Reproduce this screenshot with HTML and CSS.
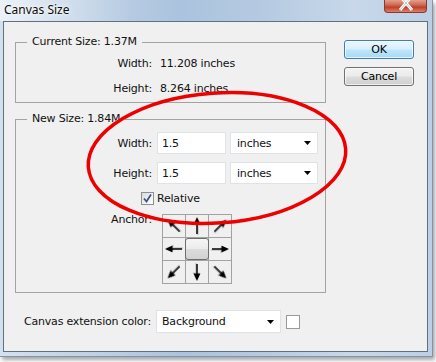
FILE: index.html
```html
<!DOCTYPE html>
<html>
<head>
<meta charset="utf-8">
<title>Canvas Size</title>
<link rel="stylesheet" href="styles.css">
</head>
<body>
<div class="window">
  <div class="titlebar">
    <span class="title">Canvas Size</span>
    <span class="close"><svg class="close-x" width="16" height="14" viewBox="0 0 16 14"><path d="M2 -4 L14 10 M14 -4 L2 10" stroke="#ffffff" stroke-width="3" fill="none"/><path d="M2 -4 L14 10 M14 -4 L2 10" stroke="#c9c9c9" stroke-width="1" fill="none"/></svg></span>
  </div>
  <div class="client">
    <div class="main">
      <fieldset class="group current">
        <legend>Current Size: 1.37M</legend>
        <div class="info-row"><span class="lbl">Width:</span><span class="val">11.208 inches</span></div>
        <div class="info-row"><span class="lbl">Height:</span><span class="val">8.264 inches</span></div>
      </fieldset>
      <fieldset class="group newsize">
        <legend>New Size: 1.84M</legend>
        <div class="field-row first"><span class="lbl">Width:</span><span class="input">1.5</span><span class="select unit"><span>inches</span><svg class="caret" width="7" height="4" viewBox="0 0 7 4"><polygon points="0,0 7,0 3.5,4" fill="#000"/></svg></span></div>
        <div class="field-row"><span class="lbl">Height:</span><span class="input">1.5</span><span class="select unit"><span>inches</span><svg class="caret" width="7" height="4" viewBox="0 0 7 4"><polygon points="0,0 7,0 3.5,4" fill="#000"/></svg></span></div>
        <div class="check-row"><span class="checkbox"><svg width="11" height="11" viewBox="0 0 11 11"><path d="M2 5.5 L4.5 8.5 L9 1.5" stroke="#3b5489" stroke-width="1.8" fill="none"/></svg></span><span class="check-label">Relative</span></div>
        <div class="anchor-row">
          <span class="lbl anchor-lbl">Anchor:</span>
          <div class="anchor-grid">
            <div class="cell"><svg class="arrow r-nw" viewBox="0 0 22 22" width="22" height="22"><path d="M11 19 V8" stroke="#000" stroke-width="1.5"/><polygon points="11,2 7.6,9.5 14.4,9.5" fill="#000"/></svg></div>
            <div class="cell"><svg class="arrow r-n" viewBox="0 0 22 22" width="22" height="22"><path d="M11 19 V8" stroke="#000" stroke-width="1.5"/><polygon points="11,2 7.6,9.5 14.4,9.5" fill="#000"/></svg></div>
            <div class="cell"><svg class="arrow r-ne" viewBox="0 0 22 22" width="22" height="22"><path d="M11 19 V8" stroke="#000" stroke-width="1.5"/><polygon points="11,2 7.6,9.5 14.4,9.5" fill="#000"/></svg></div>
            <div class="cell"><svg class="arrow r-w" viewBox="0 0 22 22" width="22" height="22"><path d="M11 19 V8" stroke="#000" stroke-width="1.5"/><polygon points="11,2 7.6,9.5 14.4,9.5" fill="#000"/></svg></div>
            <div class="cell center"><span class="anchor-btn"></span></div>
            <div class="cell"><svg class="arrow r-e" viewBox="0 0 22 22" width="22" height="22"><path d="M11 19 V8" stroke="#000" stroke-width="1.5"/><polygon points="11,2 7.6,9.5 14.4,9.5" fill="#000"/></svg></div>
            <div class="cell"><svg class="arrow r-sw" viewBox="0 0 22 22" width="22" height="22"><path d="M11 19 V8" stroke="#000" stroke-width="1.5"/><polygon points="11,2 7.6,9.5 14.4,9.5" fill="#000"/></svg></div>
            <div class="cell"><svg class="arrow r-s" viewBox="0 0 22 22" width="22" height="22"><path d="M11 19 V8" stroke="#000" stroke-width="1.5"/><polygon points="11,2 7.6,9.5 14.4,9.5" fill="#000"/></svg></div>
            <div class="cell"><svg class="arrow r-se" viewBox="0 0 22 22" width="22" height="22"><path d="M11 19 V8" stroke="#000" stroke-width="1.5"/><polygon points="11,2 7.6,9.5 14.4,9.5" fill="#000"/></svg></div>
          </div>
        </div>
      </fieldset>
      <div class="ext-row">
        <span class="lbl ext-lbl">Canvas extension color:</span>
        <span class="select ext"><span>Background</span><svg class="caret" width="7" height="4" viewBox="0 0 7 4"><polygon points="0,0 7,0 3.5,4" fill="#000"/></svg></span>
        <span class="swatch"></span>
      </div>
    </div>
    <div class="buttons">
      <button class="btn ok">OK</button>
      <button class="btn cancel">Cancel</button>
    </div>
  </div>
  <svg class="highlight" width="436" height="362" viewBox="0 0 436 362">
    <ellipse cx="217" cy="158" rx="129" ry="65" transform="rotate(-4 217 158)" fill="none" stroke="#ee0000" stroke-width="3.5"/>
  </svg>
</div>
</body>
</html>
```

FILE: styles.css
```css
* { box-sizing: border-box; }

html, body {
  margin: 0;
  padding: 0;
  background: #ffffff;
}

body {
  width: 436px;
  height: 362px;
  overflow: hidden;
  font-family: "DejaVu Sans", Verdana, sans-serif;
  font-size: 11px;
  letter-spacing: -0.2px;
  color: #111;
}

.window {
  position: relative;
  width: 433px;
  height: 357px;
  display: flex;
  flex-direction: column;
  background: linear-gradient(90deg, #d3e0ee 0%, #c2d3e6 18%, #abc3de 42%, #b6cbe2 62%, #c8d8ea 82%, #bccfe4 100%);
  box-shadow: 2px 3px 4px rgba(0, 0, 0, 0.35);
  border-right: 1px solid #7f93aa;
  border-bottom: 1px solid #7f93aa;
}

.titlebar {
  height: 21px;
  display: flex;
  align-items: flex-start;
  padding-left: 4px;
  background: linear-gradient(90deg, rgba(255,255,255,0.55) 0%, rgba(255,255,255,0.25) 14%, rgba(255,255,255,0) 30%);
}

.title {
  font-family: "Noto Sans", "Open Sans", sans-serif;
  font-size: 12px;
  letter-spacing: 0;
  line-height: 20px;
  color: #0b0b0b;
  text-shadow: 0 0 6px #ffffff, 0 0 3px #ffffff;
}

.close {
  margin-left: auto;
  margin-right: 5px;
  width: 43px;
  height: 13px;
  display: flex;
  justify-content: center;
  align-items: flex-start;
  overflow: hidden;
  border: 1px solid #8a3a2c;
  border-top: none;
  border-radius: 0 0 4px 4px;
  background: linear-gradient(180deg, #e2a090 0%, #d06a55 40%, #c13f27 60%, #d9826b 100%);
}

.close-x {
  display: block;
}

.client {
  flex: 1;
  margin: 0 4px 4px 3px;
  border: 1px solid #5f7082;
  background: #f0f0f0;
  display: flex;
  align-items: flex-start;
}

.main {
  width: 322px;
  padding: 13px 0 0 11px;
  display: flex;
  flex-direction: column;
}

.group {
  margin: 0;
  padding: 0;
  min-width: 0;
  width: 311px;
  border: 1px solid #a3a3a3;
}

.group legend {
  margin-left: 11px;
  padding: 0 5px;
  line-height: 14px;
}

.current {
  padding: 2px 0 1px;
}

.newsize {
  margin-top: 9px;
  padding-bottom: 8px;
}

.lbl {
  width: 136px;
  flex: none;
  text-align: right;
}

.info-row {
  height: 25px;
  display: flex;
  align-items: center;
}

.val {
  margin-left: 8px;
}

.field-row {
  height: 22px;
  margin-top: 8px;
  display: flex;
  align-items: center;
}

.field-row.first {
  margin-top: 6px;
}

.input {
  margin-left: 5px;
  width: 69px;
  height: 22px;
  padding-left: 4px;
  display: flex;
  align-items: center;
  background: #ffffff;
  border: 1px solid #dfe3e8;
}

.select {
  height: 22px;
  display: flex;
  align-items: center;
  justify-content: space-between;
  padding: 0 6px 0 6px;
  background: #ffffff;
  border: 1px solid #dfe3e8;
}

.unit {
  margin-left: 4px;
  width: 88px;
}

.caret {
  display: block;
}

.check-row {
  margin-top: 8px;
  height: 13px;
  display: flex;
  align-items: center;
  padding-left: 125px;
}

.checkbox {
  width: 13px;
  height: 13px;
  flex: none;
  display: flex;
  align-items: center;
  justify-content: center;
  border: 1px solid #8e8f8f;
  background: linear-gradient(135deg, #d8d9db 0%, #f2f2f2 60%, #ffffff 100%);
}

.checkbox svg {
  display: block;
}

.check-label {
  margin-left: 3px;
}

.anchor-row {
  margin-top: 9px;
  display: flex;
  align-items: flex-start;
}

.anchor-lbl {
  line-height: 14px;
  margin-top: -1px;
}

.anchor-grid {
  margin-left: 10px;
  width: 70px;
  height: 70px;
  display: grid;
  grid-template-columns: repeat(3, 22px);
  grid-template-rows: repeat(3, 22px);
  gap: 1px;
  padding: 1px;
  background: #a2a2a2;
}

.cell {
  background: #f0f0f0;
  display: flex;
  align-items: center;
  justify-content: center;
}

.cell.center {
  overflow: visible;
}

.anchor-btn {
  width: 24px;
  height: 22px;
  flex: none;
  border: 1px solid #6e6e6e;
  border-radius: 3px;
  background: linear-gradient(180deg, #f6f6f6 0%, #ebebeb 48%, #dcdcdc 52%, #d2d2d2 100%);
}

.arrow {
  display: block;
  filter: drop-shadow(1px 1px 0 rgba(0, 0, 0, 0.18));
}

.r-n { transform: rotate(0deg); }
.r-ne { transform: rotate(45deg); }
.r-e { transform: rotate(90deg); }
.r-se { transform: rotate(135deg); }
.r-s { transform: rotate(180deg); }
.r-sw { transform: rotate(225deg); }
.r-w { transform: rotate(270deg); }
.r-nw { transform: rotate(315deg); }

.ext-row {
  margin-top: 17px;
  margin-left: -11px;
  display: flex;
  align-items: center;
}

.ext-lbl {
  width: 147px;
}

.ext {
  margin-left: 5px;
  width: 125px;
  height: 23px;
  padding-left: 5px;
}

.swatch {
  margin-left: 5px;
  width: 14px;
  height: 14px;
  background: #ffffff;
  border: 1px solid #9a9a9a;
}

.buttons {
  margin-left: 18px;
  padding-top: 18px;
  display: flex;
  flex-direction: column;
  gap: 8px;
}

.btn {
  width: 70px;
  height: 19px;
  padding: 0;
  font-family: "DejaVu Sans", Verdana, sans-serif;
  font-size: 11px;
  letter-spacing: -0.2px;
  color: #000;
  border-radius: 3px;
  border: 1px solid #707070;
  background: linear-gradient(180deg, #f2f2f2 0%, #ebebeb 49%, #dddddd 51%, #cfcfcf 100%);
  box-shadow: inset 0 0 0 1px rgba(255, 255, 255, 0.7);
}

.btn.ok {
  border-color: #3c7fb1;
  background: linear-gradient(180deg, #eaf6fd 0%, #d9f0fc 49%, #bee6fd 51%, #a7d9f5 100%);
}

.highlight {
  position: absolute;
  left: 0;
  top: 0;
  pointer-events: none;
}
```
